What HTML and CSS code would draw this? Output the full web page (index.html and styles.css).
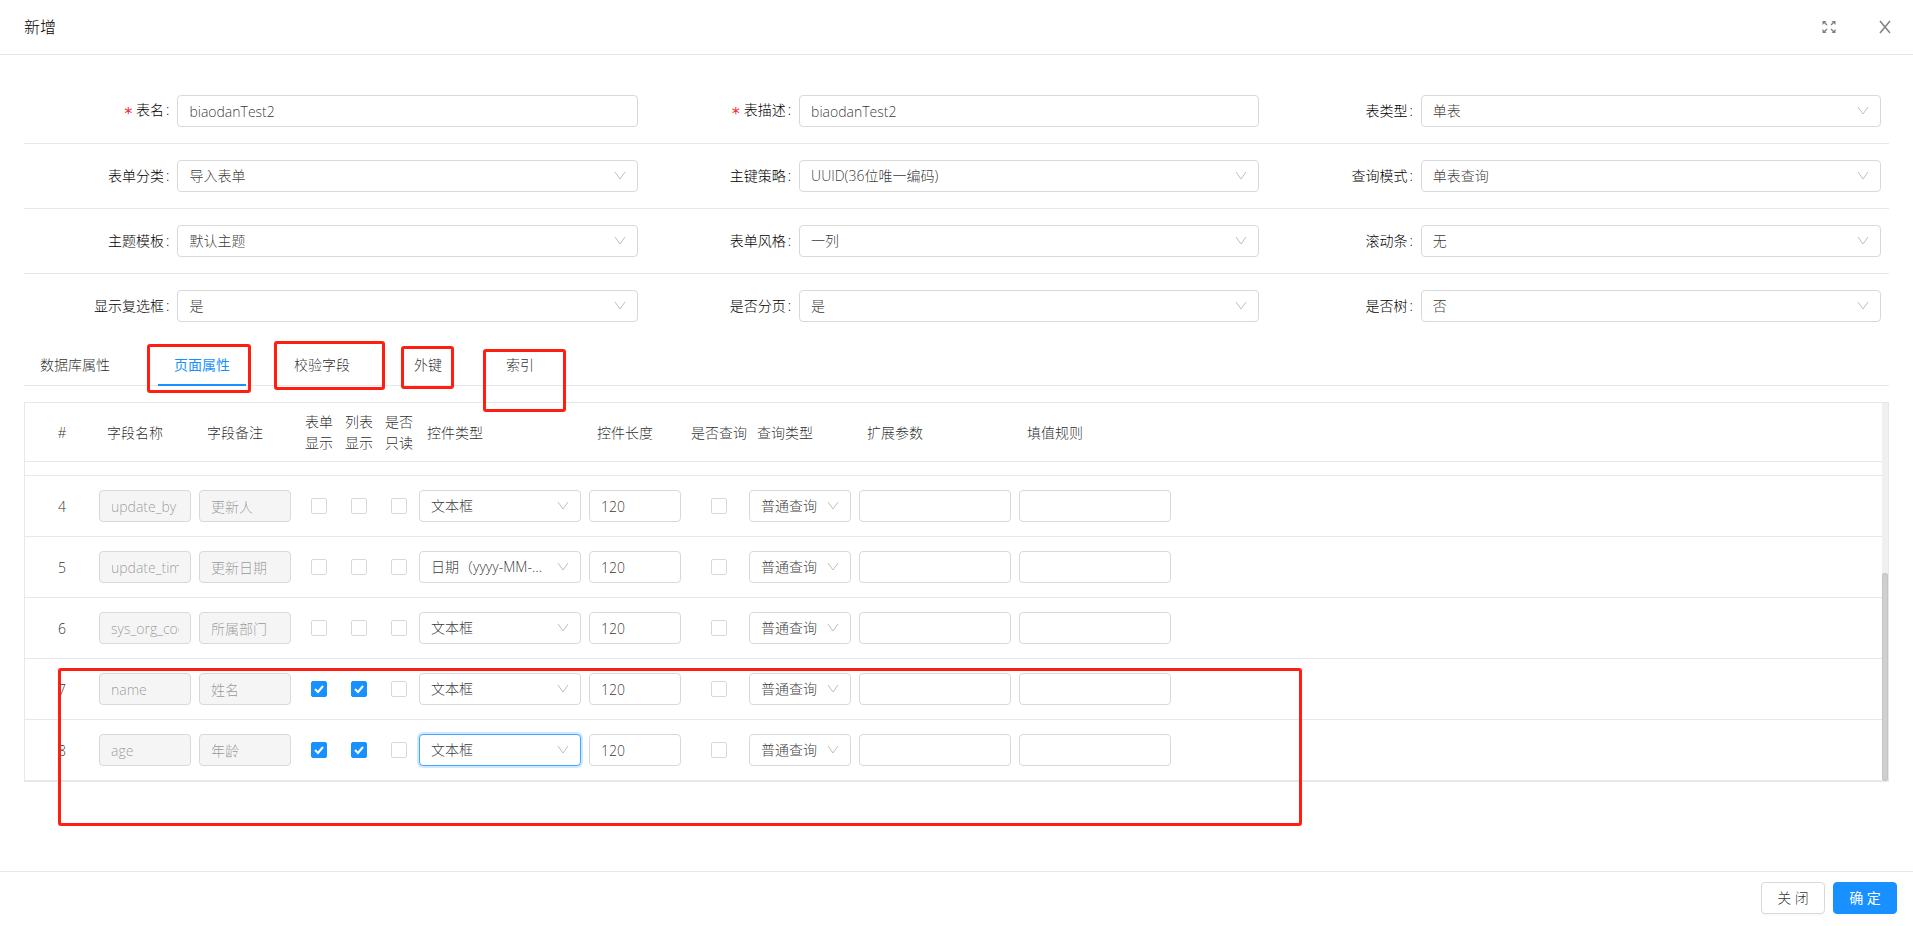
FILE: index.html
```html
<!DOCTYPE html>
<html lang="zh-CN">
<head>
    <meta charset="UTF-8">
    <meta name="viewport" content="width=device-width, initial-scale=1.0">
    <title>新增</title>
    <link rel="stylesheet" href="styles.css">
</head>
<body>
    <div class="modal">
        <header class="modal-header">
            <h1>新增</h1>
            <div class="modal-tools">
                <button type="button" class="icon-button" aria-label="全屏">
                    <svg width="14" height="14" viewBox="0 0 14 14" fill="none" stroke="currentColor" stroke-width="1.4">
                        <path d="M5 5L2 2M9 5l3-3M5 9l-3 3M9 9l3 3"/>
                        <path fill="currentColor" stroke="none" d="M.5 1h4l-4 4zM13.5 1h-4l4 4zM.5 13h4l-4-4zM13.5 13h-4l4-4z"/>
                    </svg>
                </button>
                <button type="button" class="icon-button" aria-label="关闭">
                    <svg width="14" height="14" viewBox="0 0 14 14" fill="none" stroke="currentColor" stroke-width="1.5">
                        <path d="M2 1l10 12M12 1L2 13"/>
                    </svg>
                </button>
            </div>
        </header>

        <main class="modal-body">
            <form class="base-form">
                <div class="form-row">
                    <div class="form-item"><label class="required" for="tableName">表名</label><input type="text" id="tableName" value="biaodanTest2"></div>
                    <div class="form-item"><label class="required" for="tableTxt">表描述</label><input type="text" id="tableTxt" value="biaodanTest2"></div>
                    <div class="form-item"><label for="tableType">表类型</label><select id="tableType"><option>单表</option></select></div>
                </div>
                <div class="form-row">
                    <div class="form-item"><label for="formCategory">表单分类</label><select id="formCategory"><option>导入表单</option></select></div>
                    <div class="form-item"><label for="idType">主键策略</label><select id="idType"><option>UUID(36位唯一编码)</option></select></div>
                    <div class="form-item"><label for="queryMode">查询模式</label><select id="queryMode"><option>单表查询</option></select></div>
                </div>
                <div class="form-row">
                    <div class="form-item"><label for="theme">主题模板</label><select id="theme"><option>默认主题</option></select></div>
                    <div class="form-item"><label for="formStyle">表单风格</label><select id="formStyle"><option>一列</option></select></div>
                    <div class="form-item"><label for="scroll">滚动条</label><select id="scroll"><option>无</option></select></div>
                </div>
                <div class="form-row">
                    <div class="form-item"><label for="isCheckbox">显示复选框</label><select id="isCheckbox"><option>是</option></select></div>
                    <div class="form-item"><label for="isPage">是否分页</label><select id="isPage"><option>是</option></select></div>
                    <div class="form-item"><label for="isTree">是否树</label><select id="isTree"><option>否</option></select></div>
                </div>
            </form>

            <nav class="tabs">
                <a href="#db">数据库属性</a>
                <a href="#page" class="active">页面属性</a>
                <a href="#check">校验字段</a>
                <a href="#key">外键</a>
                <a href="#index">索引</a>
                <span class="mark mark-page"></span>
                <span class="mark mark-check"></span>
                <span class="mark mark-key"></span>
                <span class="mark mark-index"></span>
            </nav>

            <div class="table-box">
                <table class="field-table">
                    <colgroup>
                        <col class="w70"><col class="w100"><col class="w100">
                        <col class="w40"><col class="w40"><col class="w40">
                        <col class="w170"><col class="w100"><col class="w60"><col class="w110">
                        <col class="w160"><col class="w160"><col>
                    </colgroup>
                    <thead>
                        <tr>
                            <th class="num">#</th>
                            <th>字段名称</th>
                            <th>字段备注</th>
                            <th class="narrow">表单显示</th>
                            <th class="narrow">列表显示</th>
                            <th class="narrow">是否只读</th>
                            <th>控件类型</th>
                            <th>控件长度</th>
                            <th class="query">是否查询</th>
                            <th>查询类型</th>
                            <th>扩展参数</th>
                            <th>填值规则</th>
                            <th></th>
                        </tr>
                    </thead>
                    <tbody id="fields">
                        <tr class="cut"><td colspan="13"></td></tr>
                    </tbody>
                </table>
                <div class="scrollbar"><div class="thumb"></div></div>
                <span class="mark mark-rows"></span>
            </div>
        </main>

        <footer class="modal-footer">
            <button type="button" class="btn">关 闭</button>
            <button type="button" class="btn primary">确 定</button>
        </footer>
    </div>

    <script>
        const fields = [
            { no: 4, name: 'update_by', remark: '更新人', type: '文本框' },
            { no: 5, name: 'update_time', remark: '更新日期', type: '日期（yyyy-MM-dd HH:mm:ss）' },
            { no: 6, name: 'sys_org_code', remark: '所属部门', type: '文本框' },
            { no: 7, name: 'name', remark: '姓名', type: '文本框', show: true },
            { no: 8, name: 'age', remark: '年龄', type: '文本框', show: true, focus: true }
        ];

        function renderFields() {
            const body = document.getElementById('fields');
            fields.forEach((f) => {
                const tr = document.createElement('tr');
                const checked = f.show ? 'checked' : '';
                tr.innerHTML = `
                    <td class="num">${f.no}</td>
                    <td><input type="text" aria-label="字段名称" value="${f.name}" disabled></td>
                    <td><input type="text" aria-label="字段备注" value="${f.remark}" disabled></td>
                    <td class="check"><input type="checkbox" aria-label="表单显示" ${checked}></td>
                    <td class="check"><input type="checkbox" aria-label="列表显示" ${checked}></td>
                    <td class="check"><input type="checkbox" aria-label="是否只读"></td>
                    <td><select aria-label="控件类型" class="${f.focus ? 'focused' : ''}"><option>${f.type}</option></select></td>
                    <td><input type="text" aria-label="控件长度" value="120"></td>
                    <td class="check query"><input type="checkbox" aria-label="是否查询"></td>
                    <td><select aria-label="查询类型"><option>普通查询</option></select></td>
                    <td><input type="text" aria-label="扩展参数"></td>
                    <td><input type="text" aria-label="填值规则"></td>
                    <td></td>
                `;
                body.appendChild(tr);
            });
        }

        renderFields();
    </script>
</body>
</html>
```
FILE: styles.css
```css
* {
    box-sizing: border-box;
}
body {
    margin: 0;
    font-family: "Open Sans", "Noto Sans CJK SC", sans-serif;
    font-size: 14px;
    font-weight: 300;
    line-height: 21px;
    color: rgba(0, 0, 0, 0.85);
    background-color: #fff;
}
.modal {
    min-height: 100vh;
    display: flex;
    flex-direction: column;
}
.modal-header {
    display: flex;
    align-items: center;
    justify-content: space-between;
    height: 55px;
    padding: 0 20px 0 24px;
    border-bottom: 1px solid #e8e8e8;
}
.modal-header h1 {
    margin: 0;
    font-size: 16px;
    font-weight: 300;
    color: #000;
}
.modal-tools {
    display: flex;
    gap: 40px;
}
.icon-button {
    display: flex;
    padding: 1px;
    border: none;
    background: none;
    color: #808080;
    cursor: pointer;
}
.modal-body {
    flex: 1;
    padding: 24px;
}
.form-row {
    display: grid;
    grid-template-columns: repeat(3, 1fr);
    padding: 16px 0;
    border-bottom: 1px solid #e8e8e8;
}
.form-row:last-child {
    border-bottom: none;
}
.form-item {
    display: grid;
    grid-template-columns: 1fr 3fr;
    align-items: center;
    padding-right: 8px;
}
.form-item label {
    padding-bottom: 2px;
    text-align: right;
    white-space: nowrap;
    color: #000;
}
.form-item label::after {
    content: ":";
    margin: 0 8px 0 2px;
}
.form-item label.required::before {
    content: "*";
    margin-right: 3px;
    font-family: "DejaVu Sans Mono", monospace;
    font-size: 16px;
    line-height: 1;
    vertical-align: -4px;
    color: #f5222d;
}
input[type="text"], select {
    display: block;
    width: 100%;
    height: 32px;
    padding: 4px 11px;
    border: 1px solid #d9d9d9;
    border-radius: 4px;
    background-color: #fff;
    font: inherit;
    color: rgba(0, 0, 0, 0.8);
    outline: none;
}
select {
    appearance: none;
    padding: 3px 32px 5px 11px;
    text-overflow: ellipsis;
    background-image: url("data:image/svg+xml,%3Csvg xmlns='http://www.w3.org/2000/svg' width='12' height='12' fill='none' stroke='%23bfbfbf'%3E%3Cpath d='M1 2l5 7 5-7'/%3E%3C/svg%3E");
    background-repeat: no-repeat;
    background-position: right 11px center;
}
select.focused {
    border-color: #40a9ff;
    box-shadow: 0 0 0 2px rgba(24, 144, 255, 0.2);
}
input[type="text"]:disabled {
    background-color: #f5f5f5;
    color: rgba(0, 0, 0, 0.4);
}
input[type="checkbox"] {
    appearance: none;
    display: block;
    width: 16px;
    height: 16px;
    margin: 0;
    border: 1px solid #d9d9d9;
    border-radius: 2px;
    background-color: #fff;
}
input[type="checkbox"]:checked {
    border-color: #1890ff;
    background: #1890ff url("data:image/svg+xml,%3Csvg xmlns='http://www.w3.org/2000/svg' width='14' height='14' fill='none' stroke='%23fff' stroke-width='2'%3E%3Cpath d='M3 7l3 3 5-6'/%3E%3C/svg%3E") center no-repeat;
}
.tabs {
    position: relative;
    display: flex;
    gap: 32px;
    margin-bottom: 16px;
    padding-top: 4px;
    border-bottom: 1px solid #e8e8e8;
}
.tabs a {
    padding: 12px 16px 9px;
    margin-bottom: -1px;
    border-bottom: 2px solid transparent;
    color: rgba(0, 0, 0, 0.85);
    text-decoration: none;
}
.tabs a.active {
    color: #1890ff;
    font-weight: 400;
    border-bottom-color: #1890ff;
}
.table-box {
    position: relative;
    display: flex;
    border: 1px solid #e8e8e8;
}
.field-table {
    flex: 1;
    width: 100%;
    table-layout: fixed;
    border-collapse: separate;
    border-spacing: 0;
}
.w40 { width: 40px; }
.w60 { width: 60px; }
.w70 { width: 70px; }
.w100 { width: 100px; }
.w110 { width: 110px; }
.w160 { width: 160px; }
.w170 { width: 170px; }
.field-table th {
    height: 59px;
    padding: 0 0 0 12px;
    border-bottom: 1px solid #e8e8e8;
    font-weight: 300;
    text-align: left;
    white-space: nowrap;
}
.field-table th.narrow {
    padding-left: 10px;
    white-space: normal;
}
.field-table th.query {
    padding-left: 6px;
}
.field-table td {
    height: 61px;
    padding: 0 4px;
    border-bottom: 1px solid #e8e8e8;
}
.field-table .num {
    padding: 0 0 0 4px;
    text-align: center;
}
.field-table td.check {
    padding-left: 16px;
}
.field-table td.query {
    padding-left: 26px;
}
.field-table .cut td {
    height: 14px;
    padding: 0;
}
.scrollbar {
    display: flex;
    align-items: flex-end;
    width: 6px;
    background-color: #f0f0f0;
}
.thumb {
    width: 6px;
    height: 55%;
    border-radius: 3px;
    background-color: #d0d0d0;
    box-shadow: inset 0 0 2px rgba(0, 0, 0, 0.2);
}

/* 红色标注框 */
.mark {
    position: absolute;
    border: 3px solid #ff1f10;
    border-radius: 3px;
    pointer-events: none;
}
.mark-page {
    left: 123px;
    top: 6px;
    width: 104px;
    height: 49px;
}
.mark-check {
    left: 250px;
    top: 3px;
    width: 111px;
    height: 49px;
}
.mark-key {
    left: 377px;
    top: 8px;
    width: 53px;
    height: 43px;
}
.mark-index {
    left: 459px;
    top: 11px;
    width: 83px;
    height: 63px;
    z-index: 1;
}
.mark-rows {
    left: 33px;
    top: 265px;
    width: 1244px;
    height: 158px;
}
.modal-footer {
    display: flex;
    justify-content: flex-end;
    gap: 8px;
    padding: 10px 16px 12px;
    border-top: 1px solid #e8e8e8;
}
.btn {
    width: 64px;
    height: 32px;
    padding: 0 0 2px;
    border: 1px solid #d9d9d9;
    border-radius: 4px;
    background-color: #fff;
    box-shadow: 0 2px 0 rgba(0, 0, 0, 0.02);
    font: inherit;
    color: rgba(0, 0, 0, 0.8);
    cursor: pointer;
}
.btn.primary {
    border-color: #1890ff;
    background-color: #1890ff;
    color: #fff;
    font-weight: 400;
}
```
